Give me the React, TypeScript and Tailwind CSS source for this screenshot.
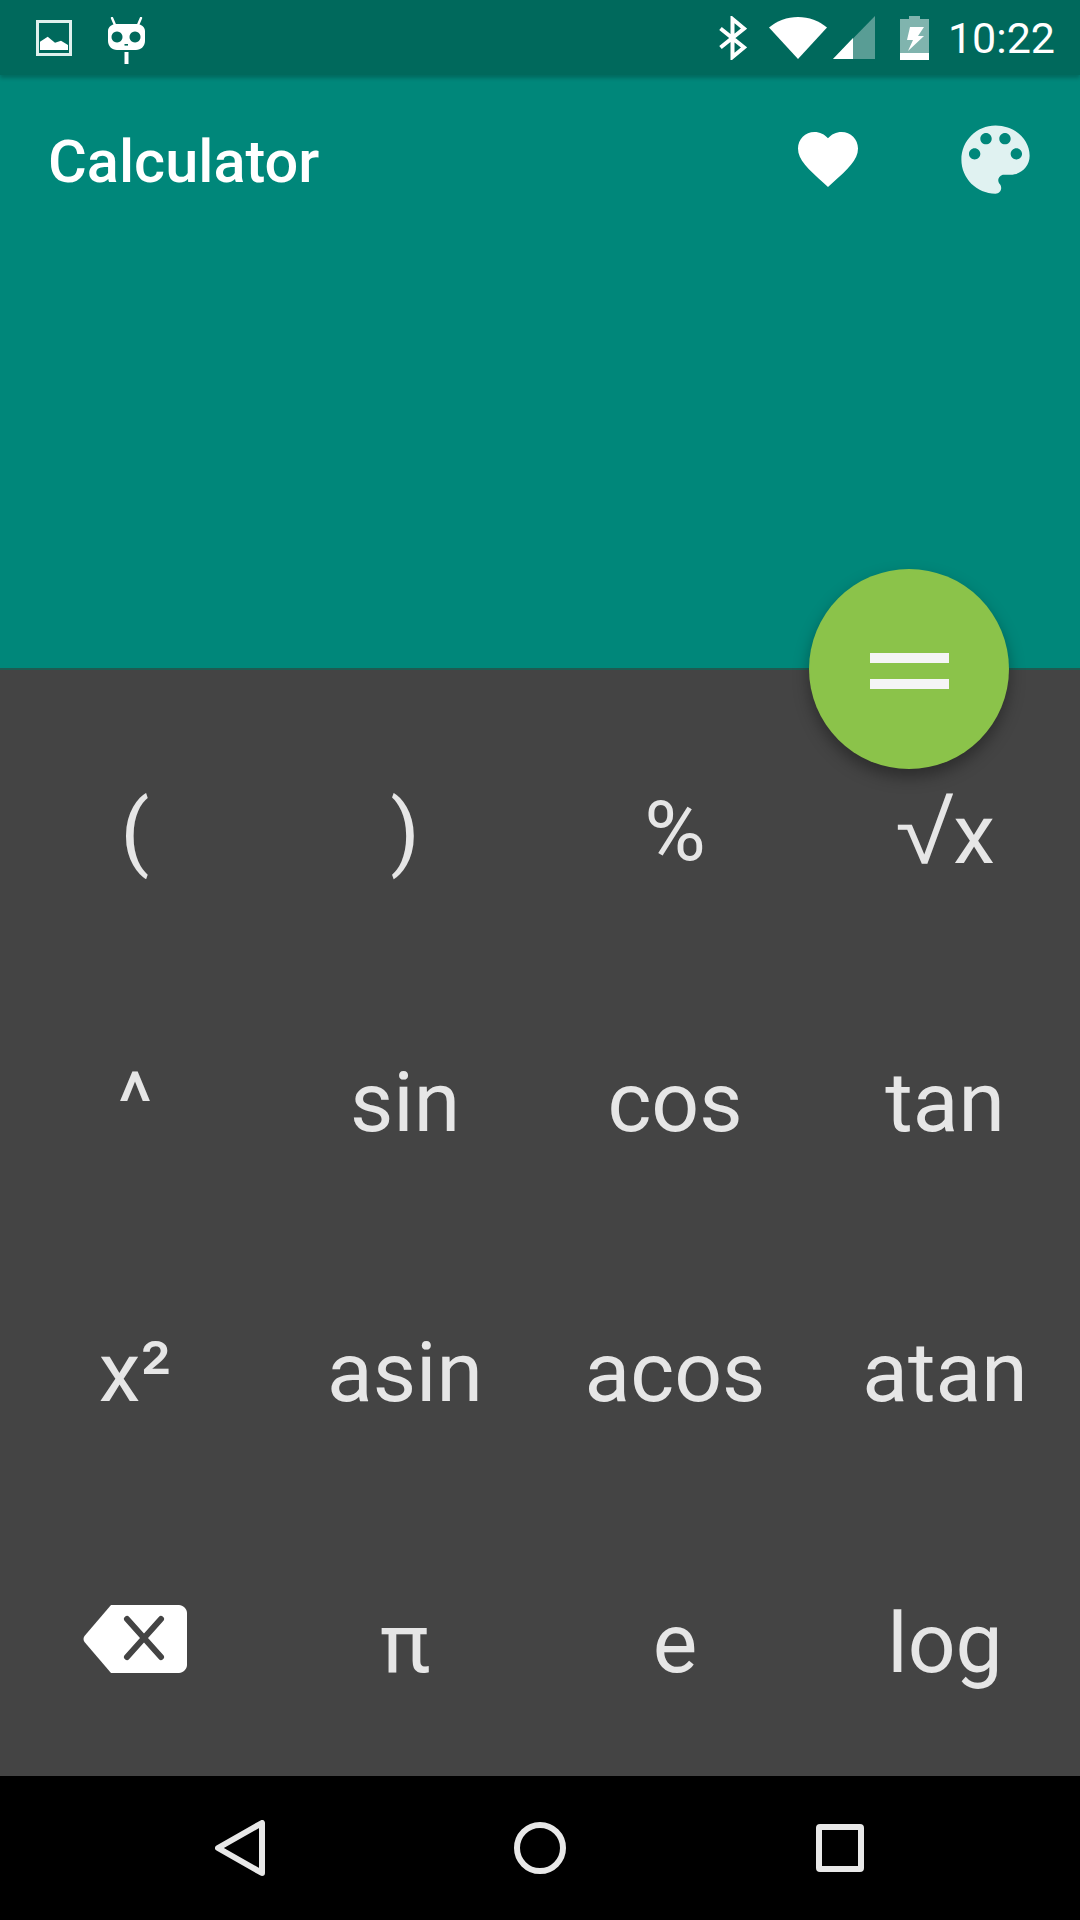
import React from 'react';

const keys = ['(', ')', '%', 'sqrt', '^', 'sin', 'cos', 'tan', 'x²', 'asin', 'acos', 'atan', 'back', 'π', 'e', 'log'];

const StatusLeft = () => (
  <div className="flex items-center gap-[36px]">
    <svg width="36" height="36" viewBox="0 0 36 36">
      <rect x="1.5" y="1.5" width="33" height="33" fill="none" stroke="#dff1ee" strokeWidth="3" />
      <path d="M4 30V21.7L11.7 16.7L19 22.7L25 20.7L32 25V30Z" fill="#fff" />
    </svg>
    <svg width="38" height="48" viewBox="0 0 38 48" className="mt-[6px]">
      <path d="M4 1L7 8M33 1L30 8" stroke="#fff" strokeWidth="2.4" strokeLinecap="round" />
      <path fillRule="evenodd" d="M8 7H29C33 7 37 10 37 14V24C37 29 33 33 28 33H9C4 33 0 29 0 24V14C0 10 4 7 8 7ZM9 14.5a5.5 5.5 0 1 0 .01 0ZM27 14.5a5.5 5.5 0 1 0 .01 0Z" fill="#fff" />
      <rect x="16.5" y="27" width="3.5" height="1.6" fill="#00695c" />
      <rect x="16.5" y="35" width="4" height="12" fill="#fff" />
    </svg>
  </div>
);

const StatusRight = () => (
  <div className="flex items-center">
    <svg width="28" height="44" viewBox="0 0 28 44" className="mr-[22px]">
      <path d="M1.5 12.5L25 31.5L13.5 41V3L25 12.5L1.5 31.5" fill="none" stroke="#fff" strokeWidth="4" />
    </svg>
    <svg width="58" height="42" viewBox="0 0 58 42" className="mr-[6px]">
      <path d="M0 10.5C8 4 18 0 29 0C40 0 50 4 58 10.5L29 42Z" fill="#fff" />
    </svg>
    <svg width="42" height="43" viewBox="0 0 42 43" className="mr-[25px]">
      <path d="M42 0V43H0Z" fill="#fff" fillOpacity="0.35" />
      <path d="M20 22V43H0Z" fill="#fff" />
    </svg>
    <svg width="29" height="44" viewBox="0 0 29 44" className="mr-[19px]">
      <path d="M9 0H20V3H29V44H0V3H9Z" fill="#fff" fillOpacity="0.5" />
      <path d="M0 37H29V44H0Z" fill="#fff" />
      <path d="M10 11H24L18 20H24L8 35L13 24H7Z" fill="#fff" />
    </svg>
    <span className="mt-[2px] text-[43px] leading-none text-white">10:22</span>
  </div>
);

const BackspaceIcon = () => (
  <svg width="104" height="68" viewBox="0 0 104 68" className="mb-[10px]">
    <path d="M28 0H96C100 0 104 4 104 8V60C104 64 100 68 96 68H28L1.5 37Q-0.5 34 1.5 31Z" fill="#fff" />
    <path d="M44 14L78 52M78 14L44 52" stroke="#444" strokeWidth="6" strokeLinecap="round" />
  </svg>
);

export default function App() {
  return (
    <div className="relative flex h-[1920px] w-[1080px] flex-col overflow-hidden bg-black [font-family:Roboto,sans-serif]">
      <div className="relative z-10 flex h-[75px] items-center justify-between bg-[#00695c] pl-[36px] pr-[25px] shadow-[0_3px_4px_rgba(0,0,0,0.22)]">
        <StatusLeft />
        <StatusRight />
      </div>

      <div className="relative h-[595px] border-b-[2px] border-[#1f5a51] bg-[#00877a]">
        <div className="flex h-[168px] items-center justify-between pl-[48px] pr-[39px]">
          <span className="mt-[7px] text-[59.5px] font-medium leading-none text-white">Calculator</span>
          <div className="flex items-center gap-[86px]">
            <svg width="72" height="72" viewBox="0 0 24 24" fill="#fff">
              <path d="M12 21.35l-1.45-1.32C5.4 15.36 2 12.28 2 8.5 2 5.42 4.42 3 7.5 3c1.74 0 3.41.81 4.5 2.09C13.09 3.81 14.76 3 16.5 3 19.58 3 22 5.42 22 8.5c0 3.78-3.4 6.86-8.55 11.54L12 21.35z" />
            </svg>
            <svg width="91" height="91" viewBox="0 0 24 24" fill="#e0f2f1">
              <path d="M12 3c-4.97 0-9 4.03-9 9s4.03 9 9 9c.83 0 1.5-.67 1.5-1.5 0-.39-.15-.74-.39-1.01-.23-.26-.38-.61-.38-.99 0-.83.67-1.5 1.5-1.5H16c2.76 0 5-2.24 5-5 0-4.42-4.03-8-9-8zm-5.5 9c-.83 0-1.5-.67-1.5-1.5S5.67 9 6.5 9 8 9.67 8 10.5 7.33 12 6.5 12zm3-4C8.67 8 8 7.33 8 6.5S8.67 5 9.5 5s1.5.67 1.5 1.5S10.33 8 9.5 8zm5 0c-.83 0-1.5-.67-1.5-1.5S13.67 5 14.5 5s1.5.67 1.5 1.5S15.33 8 14.5 8zm3 4c-.83 0-1.5-.67-1.5-1.5S16.67 9 17.5 9s1.5.67 1.5 1.5-.67 1.5-1.5 1.5z" />
            </svg>
          </div>
        </div>
      </div>

      <div className="grid h-[1106px] grid-cols-4 grid-rows-[repeat(4,270.5px)] bg-[#444444] pt-[27px]">
        {keys.map((k) => (
          <div key={k} className="flex items-center justify-center text-[84px] leading-none text-[#e6e6e6]">
            {k === 'back' ? (
              <BackspaceIcon />
            ) : k === 'sqrt' ? (
              <span className="whitespace-nowrap">
                <span className="mx-[5px] inline-block origin-center scale-x-[1.2] text-[88px] leading-[84px] [font-family:'Noto_Sans',sans-serif]">√</span>x
              </span>
            ) : (
              k
            )}
          </div>
        ))}
      </div>

      <div className="flex h-[144px] items-center justify-center bg-black">
        <div className="flex w-[300px] justify-center">
          <svg width="50" height="56" viewBox="0 0 50 56">
            <path d="M47 3V53L3 28Z" fill="none" stroke="#e8e8e8" strokeWidth="6" strokeLinejoin="round" />
          </svg>
        </div>
        <div className="flex w-[300px] justify-center">
          <div className="h-[52px] w-[52px] rounded-full border-[6px] border-[#e8e8e8]" />
        </div>
        <div className="flex w-[300px] justify-center">
          <div className="h-[48px] w-[48px] rounded-[4px] border-[6px] border-[#e8e8e8]" />
        </div>
      </div>

      <div className="absolute left-[809px] top-[569px] z-20 flex h-[200px] w-[200px] flex-col items-center justify-center gap-[16px] rounded-full bg-[#8bc34a] pt-[4px] shadow-[0_8px_16px_rgba(0,0,0,0.35)]">
        <div className="h-[10px] w-[79px] bg-[#f5f5f5]" />
        <div className="h-[10px] w-[79px] bg-[#f5f5f5]" />
      </div>
    </div>
  );
}
